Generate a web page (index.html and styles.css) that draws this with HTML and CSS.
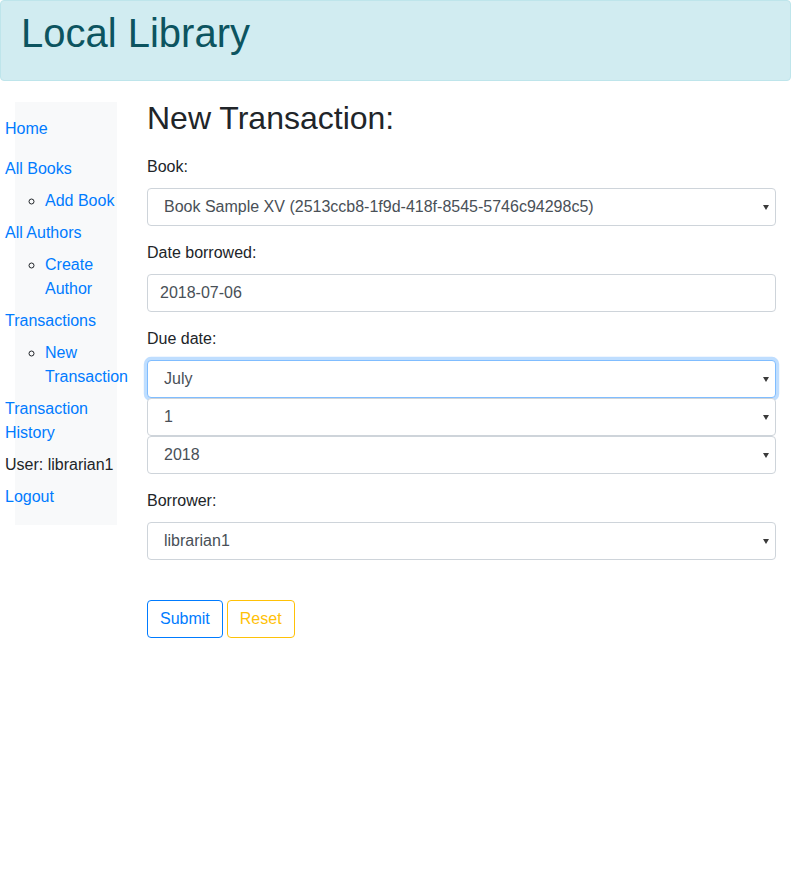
FILE: index.html
```html
<!DOCTYPE html>
<html lang="en">
<head>
<meta charset="utf-8">
<title>Local Library</title>
<link rel="stylesheet" href="styles.css">
</head>
<body>
<div class="alert">
  <h1 class="brand">Local Library</h1>
</div>
<div class="layout">
  <aside class="sidebar">
    <ul class="nav">
      <li class="nav-home"><a href="#">Home</a></li>
      <li><a href="#">All Books</a>
        <ul class="subnav"><li><a href="#">Add Book</a></li></ul>
      </li>
      <li><a href="#">All Authors</a>
        <ul class="subnav"><li><a href="#">Create Author</a></li></ul>
      </li>
      <li><a href="#">Transactions</a>
        <ul class="subnav"><li><a href="#">New Transaction</a></li></ul>
      </li>
      <li><a href="#">Transaction History</a></li>
      <li>User: librarian1</li>
      <li><a href="#">Logout</a></li>
    </ul>
  </aside>
  <main class="content">
    <h2 class="title">New Transaction:</h2>
    <form class="form">
      <div class="form-group">
        <label class="label" for="book">Book:</label>
        <div class="select-wrap">
          <select id="book" class="form-control select">
            <option>Book Sample XV (2513ccb8-1f9d-418f-8545-5746c94298c5)</option>
          </select>
        </div>
      </div>
      <div class="form-group">
        <label class="label" for="borrowed">Date borrowed:</label>
        <input id="borrowed" class="form-control" type="text" value="2018-07-06">
      </div>
      <div class="form-group">
        <label class="label" for="due-month">Due date:</label>
        <div class="select-wrap">
          <select id="due-month" class="form-control select focused"><option>July</option></select>
        </div>
        <div class="select-wrap">
          <select class="form-control select"><option>1</option></select>
        </div>
        <div class="select-wrap">
          <select class="form-control select"><option>2018</option></select>
        </div>
      </div>
      <div class="form-group">
        <label class="label" for="borrower">Borrower:</label>
        <div class="select-wrap">
          <select id="borrower" class="form-control select"><option>librarian1</option></select>
        </div>
      </div>
      <div class="actions">
        <button type="button" class="btn btn-primary">Submit</button>
        <button type="reset" class="btn btn-warning">Reset</button>
      </div>
    </form>
  </main>
</div>
</body>
</html>
```

FILE: styles.css
```css
* { box-sizing: border-box; }
html, body {
  margin: 0;
  padding: 0;
  background: #fff;
}
body {
  font-family: "Liberation Sans", Arial, sans-serif;
  font-size: 16px;
  line-height: 1.5;
  color: #212529;
}
a { color: #007bff; text-decoration: none; }

.alert {
  background: #d1ecf1;
  border: 1px solid #bee5eb;
  border-radius: 4px;
  color: #0c5460;
  padding: 8px 20px 23px;
  height: 81px;
}
.brand {
  margin: 0;
  font-size: 40px;
  font-weight: 500;
  line-height: 48px;
}

.layout {
  display: flex;
  align-items: flex-start;
}
.sidebar {
  margin: 21px 0 0 15px;
  width: 102px;
  flex: none;
  background: #f8f9fa;
  padding: 15px 0 16px;
}
.nav {
  list-style: none;
  margin: 0 0 0 -10px;
  padding: 0;
  width: 112px;
}
.nav > li { margin-top: 8px; }
.nav > li.nav-home { margin-top: 0; margin-bottom: 16px; }
.subnav {
  list-style: circle;
  margin: 8px 0 0;
  padding-left: 40px;
}

.content {
  flex: 1;
  padding: 18px 15px 0 30px;
  min-width: 0;
}
.title {
  margin: 0 0 19px;
  font-size: 32px;
  font-weight: 500;
  line-height: 1.2;
}
.form-group { margin-bottom: 16px; }
.label {
  display: block;
  line-height: 22px;
  margin-bottom: 10px;
}
.form-control {
  display: block;
  width: 100%;
  height: 38px;
  padding: 6px 12px;
  font-family: inherit;
  font-size: 16px;
  line-height: 1.5;
  color: #495057;
  background: #fff;
  border: 1px solid #ced4da;
  border-radius: 4px;
  margin: 0;
}
.select-wrap { position: relative; }
.select {
  -webkit-appearance: none;
  appearance: none;
  padding-left: 16px;
  padding-right: 24px;
}
.select-wrap::after {
  content: "";
  position: absolute;
  right: 7px;
  top: 17px;
  border-left: 3.5px solid transparent;
  border-right: 3.5px solid transparent;
  border-top: 5px solid #3a3a3a;
  pointer-events: none;
}
.focused {
  border-color: #80bdff;
  outline: 0;
  box-shadow: 0 0 0 3.2px rgba(0, 123, 255, 0.25);
}
.actions {
  display: flex;
  gap: 4px;
  padding-top: 24px;
}
.btn {
  font-family: inherit;
  font-size: 16px;
  line-height: 1.5;
  padding: 6px 12px;
  border-radius: 4px;
  background: transparent;
  border: 1px solid;
  margin: 0;
}
.btn-primary { color: #007bff; border-color: #007bff; }
.btn-warning { color: #ffc107; border-color: #ffc107; }
```
